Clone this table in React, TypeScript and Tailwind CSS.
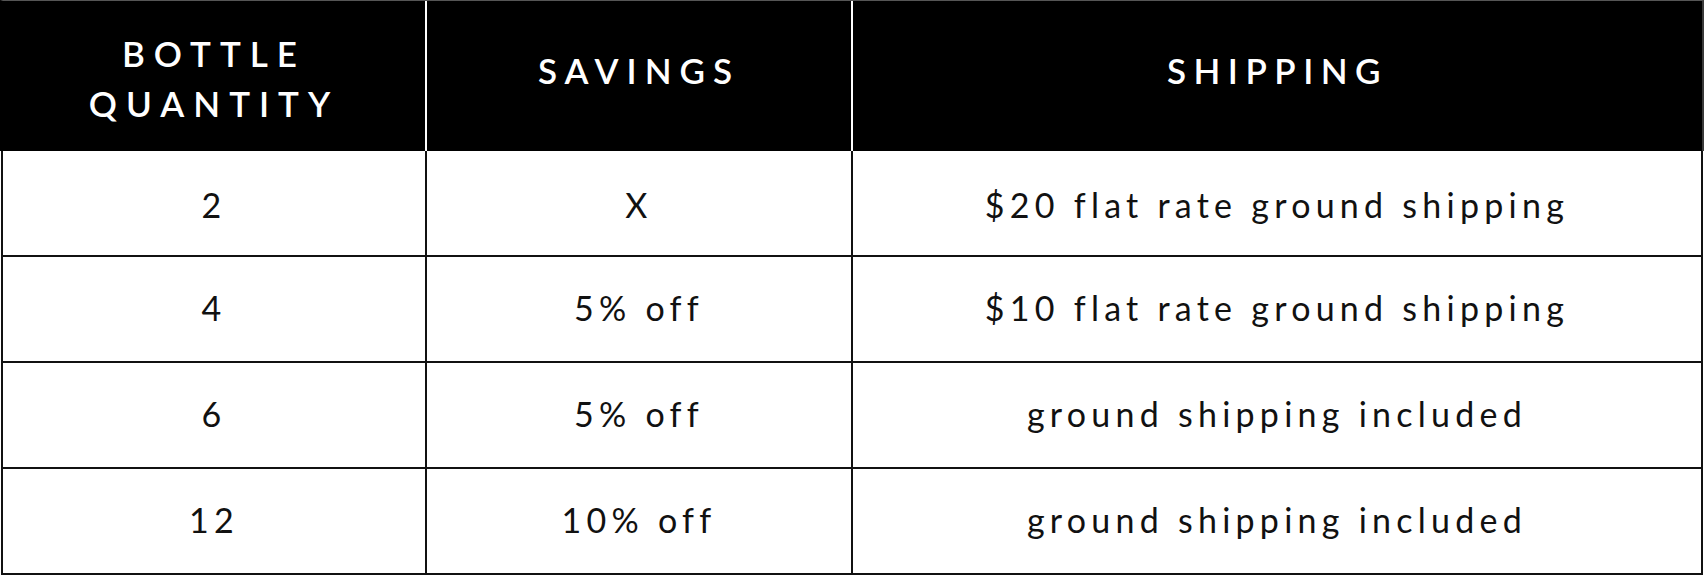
import React from "react";

const rows = [
  { qty: "2", savings: "X", shipping: "$20 flat rate ground shipping" },
  { qty: "4", savings: "5% off", shipping: "$10 flat rate ground shipping" },
  { qty: "6", savings: "5% off", shipping: "ground shipping included" },
  { qty: "12", savings: "10% off", shipping: "ground shipping included" },
];

export default function App() {
  return (
    <div
      className="w-[1705px] h-[575px] bg-white overflow-hidden"
      style={{ fontFamily: "Lato, 'Open Sans', sans-serif" }}
    >
      <div className="w-[1704px]">
        {/* header */}
        <div className="flex h-[151px] bg-black border-t border-t-[#555] border-l-[3px] border-l-black border-r-2 border-r-[#3a3a3a] text-white font-semibold uppercase text-[35px] tracking-[8px] leading-[50px]">
          <div className="w-[424px] border-r-2 border-r-white flex items-center justify-center text-center tracking-[9px] pt-[4px]">
            <div>
              BOTTLE
              <br />
              QUANTITY
            </div>
          </div>
          <div className="w-[426px] border-r-2 border-r-white flex items-center justify-center pb-[12px]">
            SAVINGS
          </div>
          <div className="flex-1 flex items-center justify-center pb-[12px] tracking-[7.5px]">
            SHIPPING
          </div>
        </div>
        {/* body */}
        <div className="ml-px w-[1702px] border-x-2 border-[#111] text-[#111] text-[34px] tracking-[5.25px]">
          {rows.map((r, i) => {
            const pad = i === 0 ? "pt-[3px]" : "pb-[3px]";
            return (
              <div key={i} className="flex h-[106px] border-b-2 border-[#111]">
                <div className={"w-[424px] border-r-2 border-[#111] flex items-center justify-center " + pad}>
                  {r.qty}
                </div>
                <div className={"w-[426px] border-r-2 border-[#111] flex items-center justify-center " + pad}>
                  {r.savings}
                </div>
                <div className={"flex-1 flex items-center justify-center " + pad}>
                  {r.shipping}
                </div>
              </div>
            );
          })}
        </div>
      </div>
    </div>
  );
}
